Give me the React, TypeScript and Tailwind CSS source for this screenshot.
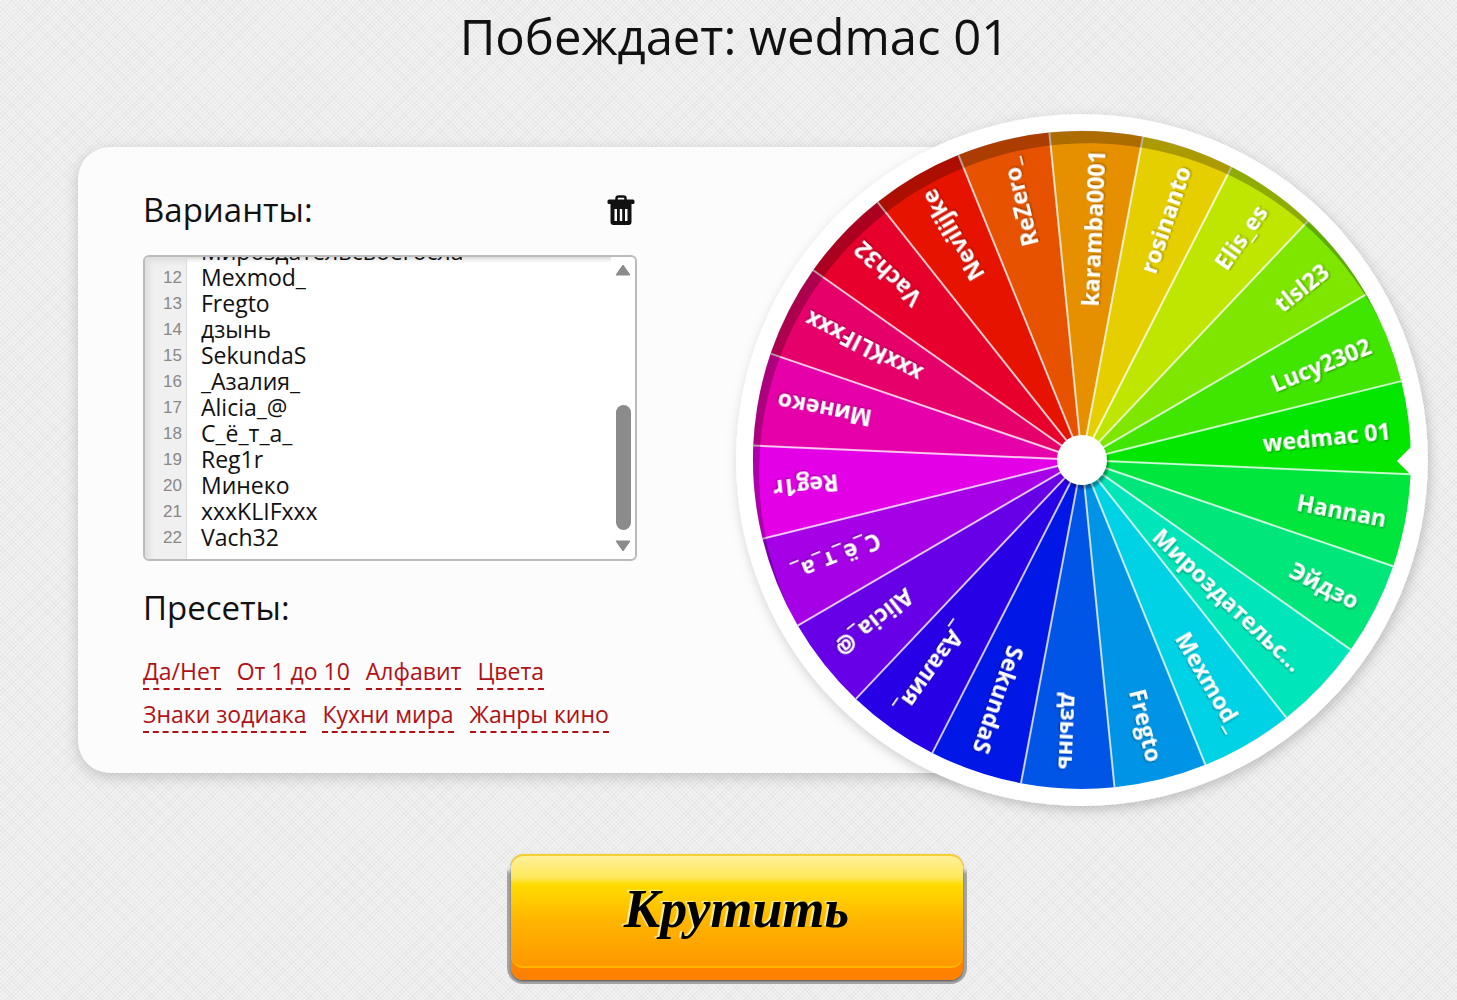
import {useEffect, useRef, useState} from "react";

const initialOptions = [
    "Nevilijke", "ReZero_", "karamba0001", "rosinanto", "Elis_es", "tlsl23",
    "Lucy2302", "wedmac 01", "Hannan", "Эйдзо", "Мироздательсвоегосла",
    "Mexmod_", "Fregto", "дзынь", "SekundaS", "_Азалия_", "Alicia_@",
    "С_ё_т_а_", "Reg1r", "Минеко", "xxxKLIFxxx", "Vach32",
];

const presets = [
    ["Да/Нет", "От 1 до 10", "Алфавит", "Цвета"],
    ["Знаки зодиака", "Кухни мира", "Жанры кино"],
];

const CENTER = 346;
const RADIUS = 329;

const LINE = 26;
const PAD = 7;
const EDITOR_HEIGHT = 302;

const point = (angle: number, r: number) => {
    const a = (angle * Math.PI) / 180;
    return `${CENTER + r * Math.cos(a)} ${CENTER + r * Math.sin(a)}`;
};

const isLong = (name: string) => name.length > 14;

function Wheel({items}: { items: string[] }) {
    const step = 360 / items.length;
    // угол, под которым колесо остановилось
    const start = 2.5 - step * 8;

    return (
        <svg viewBox="0 0 692 692" className="relative -ml-[26%] w-[51.25%] shrink-0 overflow-visible" role="img"
             aria-label="Колесо">
            <defs>
                <filter id="ring" x="-10%" y="-10%" width="120%" height="120%">
                    <feDropShadow dx="2" dy="4" stdDeviation="6" floodOpacity="0.2"/>
                </filter>
                <filter id="hub" x="-30%" y="-30%" width="170%" height="170%">
                    <feDropShadow dx="2" dy="4" stdDeviation="1" floodOpacity="0.35"/>
                </filter>
                <filter id="label" x="-20%" y="-40%" width="140%" height="180%">
                    <feDropShadow dx="1" dy="1" stdDeviation="1" floodOpacity="0.4"/>
                </filter>
            </defs>
            <circle cx={CENTER} cy={CENTER} r="346" fill="#fff" filter="url(#ring)"/>
            {items.map((item, i) => {
                const from = start + step * i;
                return (
                    <path
                        key={i}
                        d={`M${CENTER} ${CENTER}L${point(from, RADIUS)}A${RADIUS} ${RADIUS} 0 0 1 ${point(from + step, RADIUS)}Z`}
                        fill={`hsl(${5 + step * i} 100% 45%)`}
                    />
                );
            })}
            {items.map((_, i) => (
                <path key={i} d={`M${CENTER} ${CENTER}L${point(start + step * i, RADIUS)}`} stroke="#fff"
                      strokeOpacity="0.75" strokeWidth="2"/>
            ))}
            {/* тень от обода */}
            <path
                fill="#000"
                fillOpacity="0.25"
                d="M54.800 499.100A329 329 0 1 1 643.200 204.900A329 329 0 0 0 54.800 499.100Z"
            />
            {items.map((item, i) => (
                <g key={i} transform={`rotate(${start + step * (i + 0.5)} ${CENTER} ${CENTER})`}>
                    <text x={isLong(item) ? 646 : 656} y="356" textAnchor="end" fill="#fff" filter="url(#label)"
                          className="font-['Open_Sans',sans-serif] text-[23px] font-bold">
                        {isLong(item) ? item.slice(0, 12) + "..." : item}
                    </text>
                </g>
            ))}
            <circle cx={CENTER} cy={CENTER} r="25" fill="#fff" filter="url(#hub)"/>
            <path d="M661 347L675 333H680V361H675Z" fill="#fff"/>
        </svg>
    );
}

function TrashIcon() {
    return (
        <svg viewBox="0 0 28 32" className="h-8 w-7" aria-hidden="true">
            <path d="M9.500 6V4.500Q9.500 2.500 11.500 2.500H16.500Q18.500 2.500 18.500 4.500V6" fill="none" stroke="#111" strokeWidth="2.500"/>
            <rect x="0.500" y="5.500" width="27" height="4.500" rx="1.500" fill="#111"/>
            <path
                fillRule="evenodd"
                fill="#111"
                d="M3.500 10H24.500V28Q24.500 31 21.500 31H6.500Q3.500 31 3.500 28ZM7.500 15V27H10V15ZM12.800 15V27H15.200V15ZM18 15V27H20.500V15Z"
            />
        </svg>
    );
}

export default function App() {
    const [value, setValue] = useState(initialOptions.join("\n"));
    const [scroll, setScroll] = useState(0);
    const editor = useRef<HTMLTextAreaElement>(null);
    const lines = value.split("\n");

    useEffect(() => {
        if (editor.current) {
            editor.current.scrollTop = editor.current.scrollHeight;
            setScroll(editor.current.scrollTop);
        }
    }, []);

    // номера только тех строк, которые видны целиком
    const visible = lines
        .map((_, i) => ({number: i + 1, top: PAD + LINE * i - scroll}))
        .filter(({top}) => top >= 0 && top + LINE <= EDITOR_HEIGHT);

    return (
        <div
            className="flex min-h-screen flex-col items-center overflow-hidden bg-[#f2f2f2] bg-[image:repeating-linear-gradient(45deg,rgba(0,0,0,0.03)_0_1px,transparent_1px_3px),repeating-linear-gradient(-45deg,rgba(0,0,0,0.03)_0_1px,transparent_1px_3px)] font-['Open_Sans',sans-serif] text-[#111]">
            <h1 className="pt-1 pl-3 text-[49px] leading-[64px]">Побеждает: wedmac 01</h1>

            <main className="mt-[46px] flex w-full items-center pr-[29px] pl-[78px]">
                <section
                    className="min-w-0 flex-1 rounded-[32px] bg-[#fcfcfc] py-10 pl-[65px] shadow-[0_4px_14px_rgba(0,0,0,0.18)]">
                    <div className="w-full max-w-[494px]">
                        <div className="flex items-center justify-between">
                            <label htmlFor="options" className="text-[33px] leading-[46px]">Варианты:</label>
                            <button type="button" title="Очистить" className="mr-[2px] cursor-pointer"
                                    onClick={() => setValue("")}>
                                <TrashIcon/>
                            </button>
                        </div>

                        <div
                            className="mt-[22px] flex h-[306px] overflow-hidden rounded-md border-2 border-[#bbb] bg-white">
                            <ol
                                style={{paddingTop: visible.length ? visible[0].top : PAD}}
                                className="w-[42px] shrink-0 overflow-hidden border-r border-[#ddd] bg-[#f0f0f0] pr-1 text-right font-['Liberation_Sans',sans-serif] text-[17px] leading-[26px] text-[#888] shadow-[inset_4px_4px_6px_rgba(0,0,0,0.08)]">
                                {visible.map(({number}) => <li key={number}>{number}</li>)}
                            </ol>
                            <textarea
                                id="options"
                                ref={editor}
                                value={value}
                                spellCheck={false}
                                onChange={(e) => setValue(e.target.value)}
                                onScroll={(e) => setScroll(e.currentTarget.scrollTop)}
                                className="min-w-0 flex-1 resize-none overflow-hidden pt-[6px] pb-[9px] pl-[14px] text-[23px] leading-[26px] outline-none shadow-[inset_0_6px_5px_-4px_rgba(0,0,0,0.18)]"
                            />
                            <div className="flex w-6 flex-col items-center py-[7px]" aria-hidden="true">
                                <svg viewBox="0 0 16 12" className="h-3 w-4">
                                    <path d="M8 1L15 11H1Z" fill="#8b8b8b" stroke="#8b8b8b" strokeLinejoin="round"/>
                                </svg>
                                <div className="flex w-[15px] flex-1 flex-col justify-end pb-[10px]">
                                    <div className="h-[125px] rounded-full bg-[#8b8b8b]"/>
                                </div>
                                <svg viewBox="0 0 16 12" className="h-3 w-4">
                                    <path d="M8 11L1 1H15Z" fill="#8b8b8b" stroke="#8b8b8b" strokeLinejoin="round"/>
                                </svg>
                            </div>
                        </div>

                        <h2 className="mt-6 text-[33px] leading-[46px]">Пресеты:</h2>
                        <div className="mt-6 flex flex-col gap-2">
                            {presets.map((row) => (
                                <div key={row[0]} className="flex flex-wrap gap-x-4">
                                    {row.map((name) => (
                                        <a key={name} href="#"
                                           className="border-b-2 border-dashed border-[#b01116] text-[23px] leading-[33px] text-[#b01116]">{name}</a>
                                    ))}
                                </div>
                            ))}
                        </div>
                    </div>
                </section>
                <Wheel items={lines.filter(Boolean)}/>
            </main>

            <button type="button"
                    className="mt-12 ml-4 w-[460px] max-w-full cursor-pointer rounded-2xl bg-[linear-gradient(transparent_14px,#a4a4a4_20px)] px-1 pb-1">
                <span
                    className="block rounded-xl border-t-2 border-[#f5d033] bg-[linear-gradient(#ff9a00,#ff8000)] pb-3 shadow-[0_1px_2px_rgba(0,0,0,0.5)]">
                    <span
                        className="block rounded-xl border-b-2 border-[#ffb400] bg-[linear-gradient(#fff09a_0%,#ffe85a_20%,#ffdc00_26%,#ffb400_60%,#ff9800_100%)] pt-[18px] pb-[22px] font-['Liberation_Serif',serif] text-[54px] leading-[70px] font-bold text-black italic [text-shadow:-2px_-1px_1px_#fff09a]">
                        Крутить
                    </span>
                </span>
            </button>
        </div>
    );
}
